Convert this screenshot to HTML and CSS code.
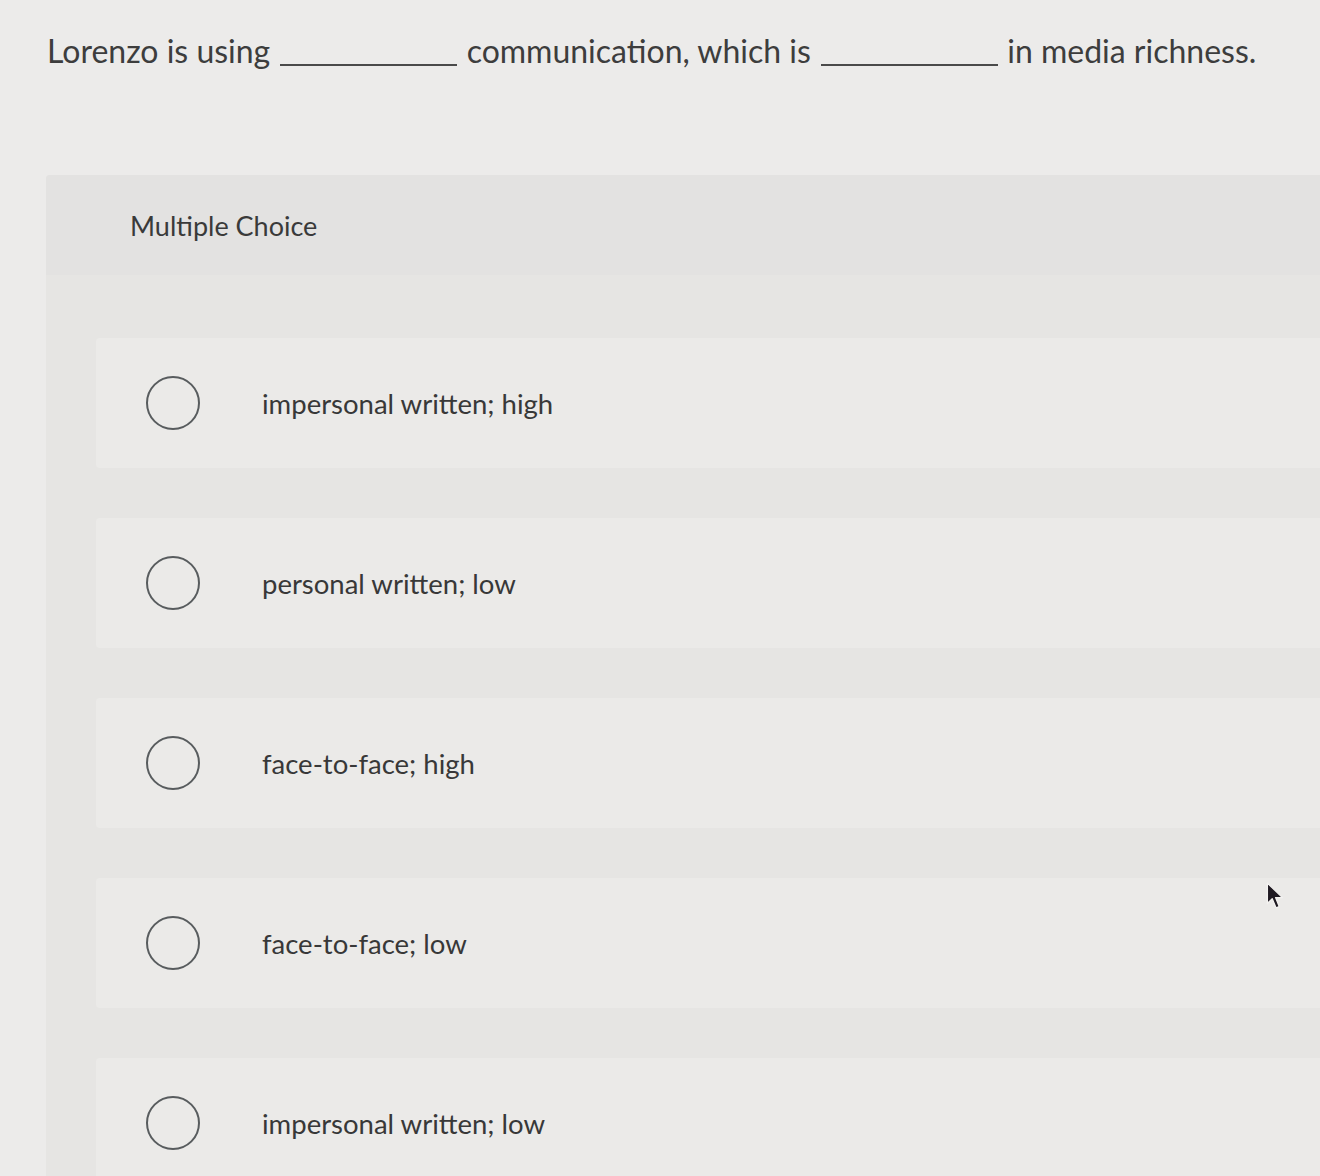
FILE: index.html
```html
<!DOCTYPE html>
<html lang="en">
<head>
<meta charset="utf-8">
<title>Multiple Choice</title>
<link rel="stylesheet" href="styles.css">
</head>
<body>
<main class="page">
  <p class="question">Lorenzo is using <span class="blank"></span> communication, which is <span class="blank"></span> in media richness.</p>
  <section class="panel">
    <header class="panel-head">Multiple Choice</header>
    <ul class="options">
      <li class="option"><span class="radio"></span><span class="label">impersonal written; high</span></li>
      <li class="option"><span class="radio"></span><span class="label">personal written; low</span></li>
      <li class="option"><span class="radio"></span><span class="label">face-to-face; high</span></li>
      <li class="option"><span class="radio"></span><span class="label">face-to-face; low</span></li>
      <li class="option"><span class="radio"></span><span class="label">impersonal written; low</span></li>
    </ul>
  </section>
  <svg class="cursor" width="22" height="28" viewBox="0 0 20 26" aria-hidden="true">
    <path d="M2 1 L2 20 L6.5 15.5 L10 24 L13 22.8 L9.6 14.5 L16 14.5 Z" fill="#1f1a22" stroke="#f3f2f0" stroke-width="1.2" stroke-linejoin="round"/>
  </svg>
</main>
</body>
</html>
```
FILE: styles.css
```css
html, body {
  margin: 0;
  padding: 0;
}
body {
  background: #ecebea;
  font-family: Lato, "Open Sans", "Liberation Sans", sans-serif;
  color: #3d3d3d;
  overflow: hidden;
}
.page {
  position: relative;
  width: 1320px;
  height: 1176px;
  overflow: hidden;
}
.question {
  margin: 0;
  padding: 32px 0 0 47px;
  font-size: 32px;
  line-height: 38px;
  white-space: nowrap;
}
.blank {
  display: inline-block;
  width: 177px;
  height: 2px;
  background: #4a4a4a;
  vertical-align: -3px;
  margin: 0 1px 0 2px;
}
.panel {
  margin: 105px 0 0 46px;
  background: #e6e5e3;
  min-height: 1000px;
  border-top-left-radius: 4px;
}
.panel-head {
  height: 100px;
  display: flex;
  align-items: center;
  padding-left: 84px;
  background: #e3e2e1;
  font-size: 27px;
  color: #3a3a3a;
  border-top-left-radius: 4px;
}
.options {
  list-style: none;
  margin: 0;
  padding: 63px 0 0 50px;
  display: flex;
  flex-direction: column;
  gap: 50px;
}
.option {
  height: 130px;
  display: flex;
  align-items: center;
  padding-left: 50px;
  background: #ebeae8;
  border-top-left-radius: 4px;
  border-bottom-left-radius: 4px;
}
.radio {
  box-sizing: border-box;
  width: 54px;
  height: 54px;
  border: 2px solid #585c5e;
  border-radius: 50%;
  flex: none;
}
.label {
  margin-left: 62px;
  font-size: 27.5px;
  color: #383838;
}
.cursor {
  position: absolute;
  left: 1265px;
  top: 882px;
}
```
